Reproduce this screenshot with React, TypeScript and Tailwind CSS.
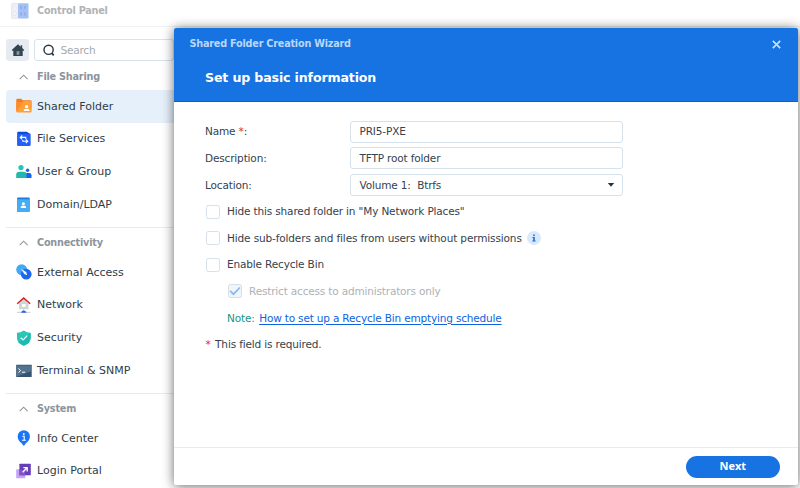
import React from "react";

type IconProps = { children: React.ReactNode };
const Icon = ({ children }: IconProps) => (
  <svg className="h-4 w-4 shrink-0" viewBox="0 0 16 16" fill="none">{children}</svg>
);

const SharedFolderIcon = () => (
  <Icon>
    <path d="M.3 2q0-1.2 1.2-1.2h3.7l1.5 1.4h7.8q1 0 1 1v8H.3z" fill="#f47a20" />
    <path d="M.3 4.3h6l1.3-1.2h8v10.3q0 1-1 1H1.3q-1 0-1-1z" fill="#ff9f38" />
    <path d="M.3 4.3h6l1.3-1.2-7.3 11z" fill="#fb8c2c" />
    <circle cx="10.6" cy="8.8" r="1.7" fill="#fff" />
    <path d="M7.7 13.1v-.8q0-1.4 1.7-1.4h2.4q1.7 0 1.7 1.4v.8z" fill="#fff" />
  </Icon>
);
const FileServicesIcon = () => (
  <Icon>
    <path d="M1.3 1.6q0-.8.8-.8h8.6l3.7 2.2v10.8q0 .8-.8.8H2.1q-.8 0-.8-.8z" fill="#0a49d8" />
    <path d="M1.3 2.8h12.2q.9 0 .9.9v10.6q0 .7-.8.7H2.1q-.8 0-.8-.7z" fill="#2360f3" />
    <path d="M9.8 8V6.4H4.4M6.2 4.5 4.2 6.4l2 1.9M9.8 8.4l2 1.9-2 1.9M11.6 10.3H6.8V8.9" stroke="#fff" strokeWidth="1.1" />
  </Icon>
);
const UserGroupIcon = () => (
  <Icon>
    <circle cx="5" cy="3.6" r="2.6" fill="#1fc7b4" />
    <circle cx="11.6" cy="6.2" r="1.7" fill="#1763f0" />
    <path d="M9 14v-3q0-2 2-2h2.3q2.2 0 2.2 2.2V14z" fill="#1763f0" />
    <path d="M.2 14v-3.2q0-3 3-3h4.3q3 0 3 3V14z" fill="#22b8aa" />
  </Icon>
);
const DomainIcon = () => (
  <Icon>
    <path d="M1.1 1.4q0-.8.8-.8h10.9q.9 0 .9.9V14q0 .8-.8.8H1.1z" fill="#167ddd" />
    <path d="M1.1 2.2h11.7q.9 0 .9.8v11.2q0 .8-.8.8H1.9q-.8 0-.8-.8z" fill="#46adf5" />
    <circle cx="7.4" cy="6.7" r="1.5" fill="#fff" />
    <path d="M4.7 10.9v-.7q0-1.5 1.5-1.5h2.4q1.5 0 1.5 1.5v.7z" fill="#fff" />
  </Icon>
);
const ExternalIcon = () => (
  <Icon>
    <circle cx="5.6" cy="5.6" r="5.4" fill="#43a9f6" />
    <circle cx="10.2" cy="10.2" r="5.4" fill="#1d65f3" />
    <path d="M10.9 4.9a5.4 5.4 0 0 1-6 6 5.4 5.4 0 0 1 6-6" fill="#1a73ea" />
    <path d="m4.8 4.7 5.2 3.4c1.5 1.1.3 3.2-1.4 2.2z" fill="#fff" />
    <path d="m9.2 9.2 1.8 1.8" stroke="#fff" />
  </Icon>
);
const NetworkIcon = () => (
  <Icon>
    <path d="M3 6.5 7.7 2.3l4.8 4.2v5.8H3z" fill="#d2d4d7" />
    <path d="M1.2 6.8 7.7 1.1l6.5 5.7" stroke="#d42525" strokeWidth="1.5" />
    <rect x="6" y="7.1" width="3.6" height="2.7" fill="#fff" />
    <path d="M1 15.3h13.5" stroke="#c8cbd0" />
    <path d="M7.7 12.2v2.2" stroke="#c5c8cc" />
    <path d="M5.2 15.8q.2-2.2 2.5-2.2t2.7 2.2z" fill="#1769ed" />
  </Icon>
);
const SecurityIcon = () => (
  <Icon>
    <path d="M7.8.4Q10.8 2.6 14.6 2.8v5.1q0 5.2-6.8 7.8Q1 13.1 1 7.9V2.8Q4.8 2.6 7.8.4" fill="#27c6b9" />
    <path d="M14.6 3v4.9q0 5.2-6.8 7.8Q4.2 14.3 2.3 12.1z" fill="#1cbab1" />
    <path d="m4.7 7.7 2.4 2.3 4.2-4.3" stroke="#fff" strokeWidth="1.2" />
  </Icon>
);
const TerminalIcon = () => (
  <Icon>
    <rect x=".2" y="1.7" width="15.5" height="12.4" rx=".5" fill="#35536f" />
    <path d="M.9 2.4h14.1v5.8L.9 13.4z" fill="#52728f" />
    <path d="m2.5 5.5 2.1 2.1-2.1 2M6 9.2h3.2" stroke="#fff" />
  </Icon>
);
const InfoIcon = () => (
  <Icon>
    <path d="M7.8.3a6.1 6.1 0 0 1 6.1 6.2c0 3.6-2.3 5.2-4.2 7l-1.2 1.7q-.7.9-1.4 0l-1.2-1.7C4 11.7 1.7 10.1 1.7 6.5A6.1 6.1 0 0 1 7.8.3" fill="#1976fa" />
    <circle cx="7.8" cy="4" r=".9" fill="#fff" />
    <path d="M6.3 6.2h1.9v4M6 10.2h3.8" stroke="#fff" strokeWidth="1.1" />
  </Icon>
);
const LoginIcon = () => (
  <Icon>
    <rect x=".2" y="6.2" width="9.1" height="9" rx=".5" fill="#c4a5f5" />
    <rect x="3.4" y=".8" width="11.4" height="11.5" rx=".5" fill="#643fb7" />
    <path d="M3.4 6.8h6v5.5h-6z" fill="#8252cd" />
    <path d="M6.7 9.2 10.8 5M7.4 4.6h3.8v3.8" stroke="#fff" strokeWidth="1.3" />
  </Icon>
);

type Entry = { name: string; icon: React.FC; active?: boolean };
const sections: { title: string; items: Entry[] }[] = [
  {
    title: "File Sharing",
    items: [
      { name: "Shared Folder", icon: SharedFolderIcon, active: true },
      { name: "File Services", icon: FileServicesIcon },
      { name: "User & Group", icon: UserGroupIcon },
      { name: "Domain/LDAP", icon: DomainIcon },
    ],
  },
  {
    title: "Connectivity",
    items: [
      { name: "External Access", icon: ExternalIcon },
      { name: "Network", icon: NetworkIcon },
      { name: "Security", icon: SecurityIcon },
      { name: "Terminal & SNMP", icon: TerminalIcon },
    ],
  },
  {
    title: "System",
    items: [
      { name: "Info Center", icon: InfoIcon },
      { name: "Login Portal", icon: LoginIcon },
    ],
  },
];

function Sidebar() {
  return (
    <aside className="flex w-[180px] flex-col pl-1.5">
      <div className="mt-3 flex h-[22px] gap-[5px]">
        <div className="flex w-[23px] items-center justify-center rounded-[3px] bg-[#e6ebf2]">
          <svg className="h-3.5 w-3.5" viewBox="0 0 14 14">
            <path d="M7 1.2.7 7l1 1.1.6-.5V13h9.4V7.6l.6.5 1-1.1-2.1-2V2.2H9.7v1.5z" fill="#344552" />
            <path d="M5.6 8.2h2.8v3.6H5.6z" fill="#8d99a4" />
          </svg>
        </div>
        <div className="flex w-[140px] items-center gap-[6px] rounded-[3px] border border-[#d9e3ec] bg-white pl-[7.5px]">
          <svg className="h-3 w-3" viewBox="0 0 12 12" fill="none" stroke="#253645" strokeWidth="1.4">
            <circle cx="5.6" cy="5.8" r="4.6" />
            <path d="m8.8 9.2 1.9 2.1" strokeWidth="1.8" />
          </svg>
          <span className="pt-[2px] text-[10.7px] tracking-[-0.3px] text-[#a5abb1]">Search</span>
        </div>
      </div>
      {sections.map((s, i) => (
        <section key={s.title} className={i ? "mt-[5.4px] border-t border-[#e6ebf0]" : "pt-[0.6px]"}>
          <h2 className="flex h-[28.4px] items-center pl-3 pt-[2px] font-bold text-[#8c949c]">
            <svg className="mr-[7.5px] h-3 w-[11.5px]" viewBox="0 0 12 12" fill="none" stroke="#8c949c" strokeWidth="1.1">
              <path d="m1.8 8.2 4.1-4.1L10 8.2" />
            </svg>
            <span className="pt-px text-[9.7px] tracking-[-0.22px]">{s.title}</span>
          </h2>
          {s.items.map(({ name, icon: Glyph, active }) => (
            <div key={name} className={`flex h-[32.8px] items-center gap-[5px] rounded-[4px] pl-[10px] ${active ? "bg-[#e6f0fb]" : ""}`}>
              <Glyph />
              <span className="pt-px text-[11px] text-[#2f3d4a]">{name}</span>
            </div>
          ))}
        </section>
      ))}
    </aside>
  );
}

const Box = ({ checked = false }: { checked?: boolean }) => (
  <span className={`ml-[0.5px] flex h-[14px] w-[14px] shrink-0 items-center justify-center rounded-[2.5px] border ${checked ? "border-[#d4dfe8] bg-[#f0f5f9]" : "border-[#d5e0ea] bg-white"}`}>
    {checked && (
      <svg className="h-3 w-3" viewBox="0 0 12 12" fill="none" stroke="#8ab8ef" strokeWidth="1.7">
        <path d="m1.1 5.8 3.4 3.4 6.4-6.7" />
      </svg>
    )}
  </span>
);

const Field = ({ label, value, select }: { label: React.ReactNode; value: string; select?: boolean }) => (
  <div className="flex h-[26.6px] items-center">
    <span className="w-[144.5px] pt-px">{label}</span>
    <div className="flex h-[22px] w-[273.5px] items-center justify-between rounded-[3px] border border-[#d5e1eb] pl-[9px] pr-[7px]">
      <span className="whitespace-pre pt-px">{value}</span>
      {select && (
        <svg className="h-1 w-2" viewBox="0 0 8 4"><path d="M.8 0h6.4L4 3.8z" fill="#26343f" /></svg>
      )}
    </div>
  </div>
);

function Wizard() {
  return (
    <div role="dialog" className="absolute left-[174px] top-[28px] flex h-[457px] w-[624px] flex-col overflow-hidden rounded-[2px] bg-white shadow-[0_1px_12px_rgba(0,0,0,0.6)]">
      <header className="h-[74px] border-b border-[#0d5fd0] bg-[#1673e1]">
        <div className="flex h-8 items-center justify-between pl-[15.5px] pr-[17px] text-[9.7px] font-bold text-[#bad7fa]">
          <span className="tracking-[-0.22px]">Shared Folder Creation Wizard</span>
          <svg className="h-[9px] w-[9px]" viewBox="0 0 9 9" stroke="#c9dff8" strokeWidth="1.7"><path d="m.8.8 7.4 7.4M8.2.8.8 8.2" /></svg>
        </div>
        <h1 className="pl-[31px] pt-[8px] text-[12.6px] font-bold leading-[19px] tracking-[-0.15px] text-white">Set up basic information</h1>
      </header>
      <div className="flex flex-1 flex-col pl-[31px] pt-[16.5px] text-[10.5px] tracking-[-0.15px] text-[#35424d]">
        <Field label={<>Name <span className="text-[#e8212b]">*</span>:</>} value="PRI5-PXE" />
        <Field label="Description:" value="TFTP root folder" />
        <Field label="Location:" value="Volume 1:  Btrfs" select />
        <label className="flex h-[26.6px] items-center gap-[7.5px]"><Box /><span className="pt-px">Hide this shared folder in "My Network Places"</span></label>
        <label className="flex h-[26.6px] items-center gap-[7.5px]">
          <Box /><span className="pt-px tracking-[-0.13px]">Hide sub-folders and files from users without permissions</span>
          <svg className="-ml-[2px] h-[14px] w-[14px]" viewBox="0 0 14 14">
            <circle cx="7" cy="7" r="7" fill="#d9e8fb" />
            <path d="M6.2 3.6h1.6v1.5H6.2zM5.5 6h2.3v3.4h.8v1H5.4v-1h.8V7h-.7z" fill="#1769e3" />
          </svg>
        </label>
        <label className="flex h-[26.6px] items-center gap-[7.5px]"><Box /><span className="pt-px">Enable Recycle Bin</span></label>
        <label className="flex h-[26.6px] items-center gap-[7.5px] pl-[22px] text-[#adb2b7]"><Box checked /><span className="pt-px tracking-[-0.17px]">Restrict access to administrators only</span></label>
        <p className="flex h-[26.6px] items-center gap-[4.5px] pl-[22px] pt-px text-[#16968a]"><span>Note:</span><a className="tracking-[-0.17px] text-[#0d63df] underline underline-offset-[1.5px] decoration-1">How to set up a Recycle Bin emptying schedule</a></p>
        <p className="flex h-[26.6px] items-center gap-[4.5px] pl-[0.5px] pt-px"><span className="text-[#e8212b]">*</span><span>This field is required.</span></p>
      </div>
      <footer className="flex h-[38px] items-center justify-end border-t border-[#e7ebf0] pr-[18.5px]">
        <button className="h-[22px] w-[93.5px] rounded-full bg-[#1673e1] font-['Open_Sans',sans-serif] text-[11px] font-bold text-white">Next</button>
      </footer>
    </div>
  );
}

export default function App() {
  return (
    <div className="relative h-[488px] w-[800px] overflow-hidden bg-white font-['DejaVu_Sans',Verdana,sans-serif] whitespace-nowrap">
      <header className="flex h-[27px] items-center gap-[8px] border-b border-[#f0f2f4] pb-[5px] pl-[11px]">
        <svg className="h-[18px] w-[18px]" viewBox="0 0 18 18" fill="none">
          <rect x=".5" y="1.5" width="7" height="15" rx="1" fill="#f0eff6" stroke="#dcdcea" strokeWidth=".6" />
          <rect x="7" y="1.3" width="10.5" height="15.3" rx="1" fill="#a4c0f5" />
          <path d="M10 4v3M14 4v3M10 10.5v3M14 10.5v3" stroke="#7e9de1" />
          <circle cx="3.5" cy="11.5" r="1.7" fill="#fff" stroke="#cfd2e3" strokeWidth=".6" />
        </svg>
        <span className="pt-px text-[9.7px] font-bold tracking-[-0.22px] text-[#b1b3b6]">Control Panel</span>
      </header>
      <Sidebar />
      <Wizard />
    </div>
  );
}
